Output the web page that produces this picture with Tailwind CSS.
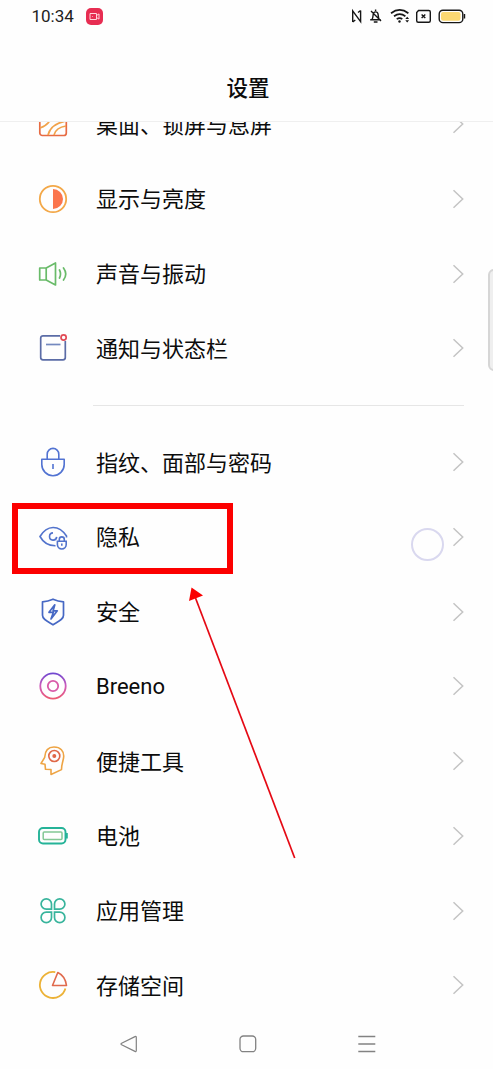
<!DOCTYPE html>
<html lang="zh-CN">
<head>
<meta charset="utf-8">
<title>设置</title>
<script src="https://cdn.jsdelivr.net/npm/@tailwindcss/browser@4"></script>
</head>
<body class="bg-[#fefefe]">
<div class="relative flex h-[1069px] w-[493px] flex-col overflow-hidden bg-[#fefefe] font-['Noto_Sans_CJK_SC',sans-serif] text-[#0c0c0c]">
  <header class="flex h-[122px] shrink-0 flex-col border-b border-[#efefef]">
    <div class="flex h-8 items-center pl-[31.500px] pr-[27px]">
      <span class="w-[54.500px] font-[Roboto,sans-serif] text-[17px] leading-8 text-[#222]">10:34</span>
      <svg class="size-[17px]" viewBox="0 0 17 17" fill="none"><rect width="17" height="17" rx="5" fill="#e72d52"/><path d="M4 5.500h6.500v6H4zM10.500 7.500l2.500-1.600v5.200l-2.500-1.600M6.500 8.200v.6" stroke="#ffd5dc"/></svg>
      <svg class="ml-auto h-8 w-[116px]" viewBox="350 0 116 32" fill="none" stroke="#161616" stroke-width="1.400">
        <path d="M352.700 22V10.800L360.600 21.700V10.500M352.700 22l2.600-2M360.600 10.500l-2.600 2"/>
        <path d="M370.200 19.800h10.600M371.800 19.800c1.300-1.700 1.200-3.300 1.300-4.800.2-4.200 4.900-4.200 5.100 0 .1 1.500 0 3.100 1.300 4.800M371 11l10 10M375.600 9.500v1.500M373.800 22h3.700"/>
        <path d="M391 13.200q8.700-6.600 17.400 0M394 16.300q5.700-4.200 11.400 0M396.700 19.100q3-2 5.600 0" stroke-width="1.700"/><circle cx="399.500" cy="21.500" r="1.200" fill="#161616" stroke="none"/><path d="M405.300 19l1.900-2.300 1.900 2.300zM405.300 20.300l1.900 2.300 1.900-2.300z" fill="#161616" stroke="none"/>
        <path d="M418.500 10.500h10.300a1.500 1.500 0 0 1 1.500 1.500v8.700a1.500 1.500 0 0 1-1.500 1.500h-10.600a1.500 1.500 0 0 1-1.500-1.500v-8.200z"/><path d="M421.600 14.500l3.700 3.600M425.300 14.500l-3.700 3.600"/>
        <rect x="439.200" y="10.200" width="23.600" height="12.400" rx="3.700"/><rect x="441" y="12" width="19.500" height="8.800" rx="2.200" fill="#fbd872" stroke="none"/><path d="M464.500 14v4.500"/>
      </svg>
    </div>
    <h1 class="pt-[38.500px] text-center text-[21.500px] font-medium leading-8 indent-[3px]">设置</h1>
  </header>

  <main class="h-[894px] shrink-0 overflow-hidden pl-[37px] pr-[28px]">
    <div class="-mt-[35.200px]">
      <div class="flex h-[74.750px] items-center"><svg class="size-8" viewBox="0 0 32 32" fill="none" stroke-width="1.700"><rect x="2.800" y="3" width="26.500" height="24.500" rx="2.500" stroke="#e76b43"/><path stroke="#f1a24a" d="M11 27c1.500-6 7-12 18-14M17 27c1-4 5-8 12-9M3 20q8-3 10-8"/></svg><span class="ml-[27px] pb-[3px] text-[22px] leading-8">桌面、锁屏与息屏</span><svg class="ml-auto mr-px h-5 w-3" viewBox="0 0 12 20" fill="none" stroke="#c4c4c4" stroke-width="1.500"><path d="M1.500 1.200l9.200 8.800-9.200 8.800"/></svg></div>
      <div class="flex h-[74.750px] items-center"><svg class="size-8" viewBox="0 0 32 32" fill="none"><circle cx="16" cy="16" r="13.200" stroke="#f3a848" stroke-width="1.800"/><path d="M16 6a10 10 0 0 1 0 20z" fill="#fb754d"/></svg><span class="ml-[27px] pb-[3px] text-[22px] leading-8">显示与亮度</span><svg class="ml-auto mr-px h-5 w-3" viewBox="0 0 12 20" fill="none" stroke="#c4c4c4" stroke-width="1.500"><path d="M1.500 1.200l9.200 8.800-9.200 8.800"/></svg></div>
      <div class="flex h-[74.750px] items-center"><svg class="size-8" viewBox="0 0 32 32" fill="none" stroke="#69bb69" stroke-width="1.700" stroke-linejoin="round"><path d="M2.700 10h6.500v12H2.700zM9.200 10L18.500 5v22L9.200 22"/><path d="M22.500 12q2 4 0 8M26.500 10q4.500 6 0 12" stroke-linecap="round"/></svg><span class="ml-[27px] pb-[3px] text-[22px] leading-8">声音与振动</span><svg class="ml-auto mr-px h-5 w-3" viewBox="0 0 12 20" fill="none" stroke="#c4c4c4" stroke-width="1.500"><path d="M1.500 1.200l9.200 8.800-9.200 8.800"/></svg></div>
      <div class="flex h-[74.750px] items-center"><svg class="size-8" viewBox="0 0 32 32" fill="none" stroke="#5b6ca6" stroke-width="1.700"><path d="M23 3.800H6a2.300 2.300 0 0 0-2.300 2.300v19.500A2.300 2.300 0 0 0 6 27.900h20a2.300 2.300 0 0 0 2.300-2.300V9"/><path d="M9 12.500h14.500" stroke="#7489bf"/><circle cx="26.600" cy="5.500" r="2.600" stroke="#e14b56"/></svg><span class="ml-[27px] pb-[3px] text-[22px] leading-8">通知与状态栏</span><svg class="ml-auto mr-px h-5 w-3" viewBox="0 0 12 20" fill="none" stroke="#c4c4c4" stroke-width="1.500"><path d="M1.500 1.200l9.200 8.800-9.200 8.800"/></svg></div>
    </div>
    <div class="mb-[18.900px] ml-14 mr-px mt-[19px] h-px bg-[#e6e6e6]"></div>
    <div>
      <div class="flex h-[74.750px] items-center"><svg class="size-8" viewBox="0 0 32 32" fill="none" stroke="#5273d2" stroke-width="1.600" stroke-linejoin="round"><path d="M10.200 13.300V8.200a5.800 5.800 0 0 1 11.600 0v5.100M4.800 13.300h22.400v5.200a11.200 11.200 0 0 1-22.400 0zM16 18v5"/></svg><span class="ml-[27px] pb-[3px] text-[22px] leading-8">指纹、面部与密码</span><svg class="ml-auto mr-px h-5 w-3" viewBox="0 0 12 20" fill="none" stroke="#c4c4c4" stroke-width="1.500"><path d="M1.500 1.200l9.200 8.800-9.200 8.800"/></svg></div>
      <div class="flex h-[74.750px] items-center"><svg class="size-8" viewBox="0 0 32 32" fill="none" stroke="#5273cc" stroke-width="1.600"><path d="M29.500 16.500V15C22 3.500 10 3.500 3 15.500c3.500 6.500 8.500 9.300 15.500 9.200M16 11.900a3.600 3.600 0 1 0 3.700 4"/><path d="M20.400 20.300h8.800v3.300a4.400 4.400 0 0 1-8.800 0zM22.300 20.300v-1.900a2.500 2.500 0 0 1 5 0v1.900M24.800 22.500v2.300"/></svg><span class="ml-[27px] pb-[3px] text-[22px] leading-8">隐私</span><svg class="ml-auto mr-px h-5 w-3" viewBox="0 0 12 20" fill="none" stroke="#c4c4c4" stroke-width="1.500"><path d="M1.500 1.200l9.200 8.800-9.200 8.800"/></svg></div>
      <div class="flex h-[74.750px] items-center"><svg class="size-8" viewBox="0 0 32 32" fill="none" stroke="#4668c4" stroke-width="1.700" stroke-linejoin="round"><path d="M16 3.200q5 2.300 10.500 2.600v13.500c0 4-4.500 5.800-10.500 9.500-6-3.700-10.500-5.500-10.500-9.500V5.800Q11 5.500 16 3.200z"/><path d="M17.800 8.800L12 16.300h4.400L14 23l6.300-8.200h-4.200z"/></svg><span class="ml-[27px] pb-[3px] text-[22px] leading-8">安全</span><svg class="ml-auto mr-px h-5 w-3" viewBox="0 0 12 20" fill="none" stroke="#c4c4c4" stroke-width="1.500"><path d="M1.500 1.200l9.200 8.800-9.200 8.800"/></svg></div>
      <div class="flex h-[74.750px] items-center"><svg class="size-8" viewBox="0 0 32 32" fill="none" stroke-width="1.800"><defs><linearGradient id="ring" x1="0" y1="0" x2="0" y2="1"><stop stop-color="#7048d0"/><stop offset=".5" stop-color="#cf5bbb"/><stop offset="1" stop-color="#ec5972"/></linearGradient></defs><circle cx="16" cy="16" r="12.700" stroke="url(#ring)"/><circle cx="16" cy="16" r="5.200" stroke="#d85aa8"/></svg><span class="ml-[27px] pt-[2px] font-[Roboto,sans-serif] text-[22px] leading-8">Breeno</span><svg class="ml-auto mr-px h-5 w-3" viewBox="0 0 12 20" fill="none" stroke="#c4c4c4" stroke-width="1.500"><path d="M1.500 1.200l9.200 8.800-9.200 8.800"/></svg></div>
      <div class="flex h-[74.750px] items-center"><svg class="size-8" viewBox="0 0 32 32" fill="none" stroke="#eea444" stroke-width="1.600" stroke-linejoin="round"><path d="M14 29.500v-5l-5.500-.2-.5-5-4-.8 3.700-6.200C8 5.500 11.500 2 17 2c6.500 0 10 4 9.700 9.600-.2 4-2.200 7-2.200 13z"/><g stroke="#df6848"><circle cx="17.300" cy="11" r="5.500"/><circle cx="17.300" cy="11" r="1.200" fill="#df6848"/></g></svg><span class="ml-[27px] pb-[3px] text-[22px] leading-8">便捷工具</span><svg class="ml-auto mr-px h-5 w-3" viewBox="0 0 12 20" fill="none" stroke="#c4c4c4" stroke-width="1.500"><path d="M1.500 1.200l9.200 8.800-9.200 8.800"/></svg></div>
      <div class="flex h-[74.750px] items-center"><svg class="size-8" viewBox="0 0 32 32" fill="none"><rect x="2" y="8" width="26.500" height="15.500" rx="4" stroke="#25b398" stroke-width="1.900"/><rect x="6.200" y="12" width="18.800" height="7.600" rx="1" stroke="#83c795" stroke-width="1.500"/><path d="M29.800 13v5.500" stroke="#25b398" stroke-width="2"/></svg><span class="ml-[27px] pb-[3px] text-[22px] leading-8">电池</span><svg class="ml-auto mr-px h-5 w-3" viewBox="0 0 12 20" fill="none" stroke="#c4c4c4" stroke-width="1.500"><path d="M1.500 1.200l9.200 8.800-9.200 8.800"/></svg></div>
      <div class="flex h-[74.750px] items-center"><svg class="size-8" viewBox="0 0 32 32" fill="none" stroke="#38b49c" stroke-width="1.700"><path d="M14.500 14.200H9.300a5.200 5.200 0 1 1 5.200-5.200zM17.500 14.200h5.200A5.200 5.200 0 1 0 17.500 9zM14.500 17.200H9.300a5.200 5.200 0 1 0 5.200 5.200zM17.500 17.200h5.200a5.200 5.200 0 1 1-5.200 5.200z"/></svg><span class="ml-[27px] pb-[3px] text-[22px] leading-8">应用管理</span><svg class="ml-auto mr-px h-5 w-3" viewBox="0 0 12 20" fill="none" stroke="#c4c4c4" stroke-width="1.500"><path d="M1.500 1.200l9.200 8.800-9.200 8.800"/></svg></div>
      <div class="flex h-[74.750px] items-center"><svg class="size-8" viewBox="0 0 32 32" fill="none" stroke-width="1.800" stroke-linejoin="round"><path d="M18.300 3.200A13 13 0 1 0 28.400 19.500" stroke="#ecb237"/><path d="M15.500 16.500l5.300-13q7.500 3.500 8.700 13z" stroke="#e06a4d" stroke-width="1.600"/></svg><span class="ml-[27px] pb-[3px] text-[22px] leading-8">存储空间</span><svg class="ml-auto mr-px h-5 w-3" viewBox="0 0 12 20" fill="none" stroke="#c4c4c4" stroke-width="1.500"><path d="M1.500 1.200l9.200 8.800-9.200 8.800"/></svg></div>
    </div>
  </main>

  <nav class="flex h-[53px] items-center justify-between pl-[119px] pr-[116px] pt-[3px]">
    <svg class="size-5" viewBox="0 0 20 20" fill="none" stroke="#828282" stroke-width="1.200" stroke-linejoin="round"><path d="M2.600 9.300L16 2.600q1.300-.5 1.300.8v13.200q0 1.300-1.300.8L2.600 10.700q-1.200-.7 0-1.400z"/></svg>
    <svg class="size-5" viewBox="0 0 20 20" fill="none" stroke="#828282" stroke-width="1.300"><rect x="2" y="2" width="15.700" height="15.700" rx="3.500"/></svg>
    <svg class="size-5" viewBox="0 0 20 20" fill="none" stroke="#828282" stroke-width="1.300"><path d="M1.300 2.500h17M1.300 10h17M1.300 17.500h17"/></svg>
  </nav>

  <div class="absolute -right-2 top-[269px] h-[102px] w-[13px] rounded-[6px] border-2 border-[#d6d6d6] bg-[#efefef]"></div>
  <div class="absolute left-[410.500px] top-[527.500px] size-[33px] rounded-full border-2 border-[#d9d8ef]"></div>
  <div class="absolute left-[11.500px] top-[503px] h-[70.500px] w-[221px] border-[6px] border-[#fc0000]"></div>
  <svg class="absolute left-[180px] top-[580px] h-[290px] w-[130px]" viewBox="0 0 130 290"><path d="M15.500 18L114.700 278" stroke="#e50914" stroke-width="1.700"/><path d="M11.500 7.500L23 15.500 9 21z" fill="#fa0000"/></svg>
</div>
</body>
</html>
